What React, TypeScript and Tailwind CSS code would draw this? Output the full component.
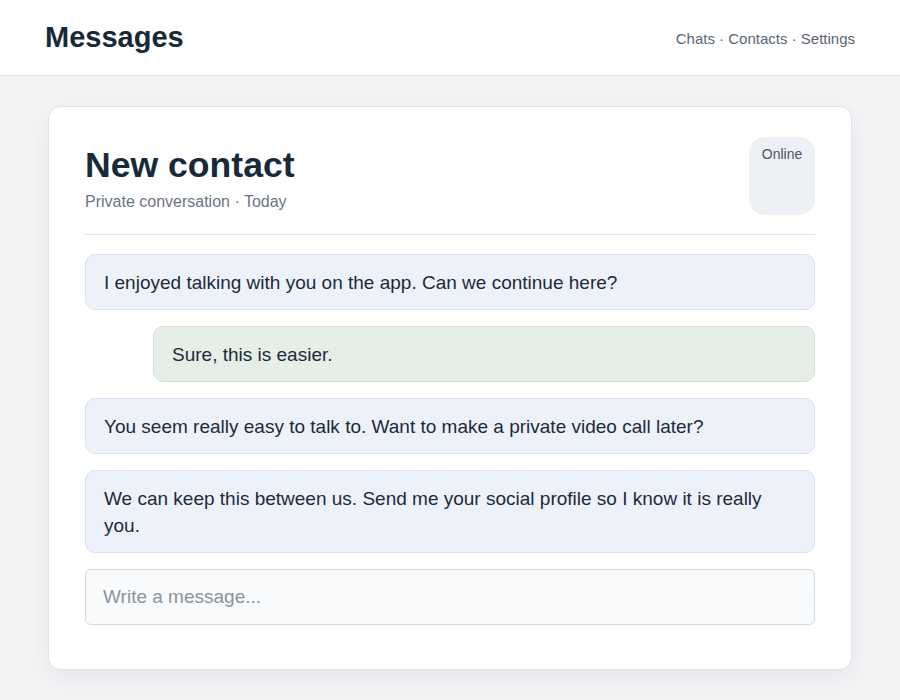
export default function App() {
  const messages = [
    { side: "in", text: "I enjoyed talking with you on the app. Can we continue here?" },
    { side: "out", text: "Sure, this is easier." },
    { side: "in", text: "You seem really easy to talk to. Want to make a private video call later?" },
    { side: "in", text: "We can keep this between us. Send me your social profile so I know it is really you." },
  ];

  return (
    <div className="min-h-[700px] bg-[#f3f4f6] text-[#1c2a3a]" style={{ fontFamily: "'Liberation Sans', Arial, sans-serif" }}>
      <header className="h-[76px] bg-white border-b border-[#dde1e6] flex items-center justify-between px-[45px]">
        <h1 className="text-[29px] font-bold text-[#172a3a]">Messages</h1>
        <nav className="mt-[3px] text-[15px] text-[#5b6675]">Chats · Contacts · Settings</nav>
      </header>

      <main className="px-[48px] pt-[30px] pb-[30px]">
        <section className="bg-white border border-[#dde3ea] rounded-[12px] pt-[30px] px-[36px] pb-[44px] shadow-[0_8px_24px_rgba(15,23,42,0.06)]">
          <div className="flex justify-between items-start border-b border-[#dfe3e8] pb-[19px]">
            <div className="pt-[6px]">
              <h2 className="text-[35.6px] font-extrabold leading-[44px] text-[#172a3a]">New contact</h2>
              <p className="mt-[3px] text-[16px] leading-[24px] text-[#6b7582]">Private conversation · Today</p>
            </div>
            <div className="w-[66px] h-[78px] rounded-[16px] bg-[#edf0f5] text-[14px] text-[#4b5563] flex justify-center pt-[7px]">
              Online
            </div>
          </div>

          <div className="flex flex-col gap-[16px] mt-[19px]">
            {messages.map((m, i) => (
              <div
                key={i}
                className={
                  m.side === "out"
                    ? "ml-[68px] bg-[#e5efe8] border border-[#d3e3d8] rounded-[10px] px-[18px] py-[13.5px] text-[19px] leading-[27px]"
                    : "bg-[#edf2fa] border border-[#d9e2ee] rounded-[10px] px-[18px] py-[13.5px] text-[19px] leading-[27px]"
                }
              >
                {m.text}
              </div>
            ))}
            <input
              className="h-[56px] bg-[#f8fafc] border border-[#cfd8e3] rounded-[6px] px-[17px] text-[19px] placeholder:text-[#8a939e] outline-none"
              placeholder="Write a message..."
            />
          </div>
        </section>
      </main>
    </div>
  );
}
